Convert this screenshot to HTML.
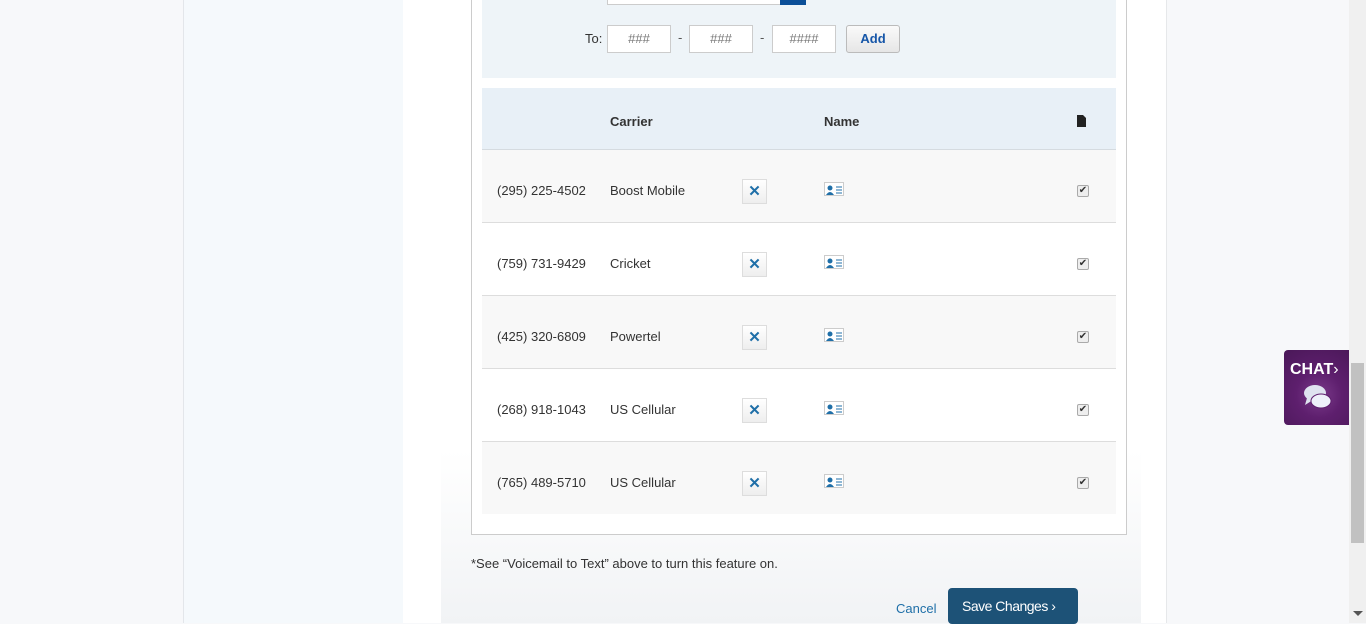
<!DOCTYPE html>
<html><head><style>
*{margin:0;padding:0;box-sizing:border-box}
body{width:1366px;height:623px;overflow:hidden;background:#f7f8fa;font-family:"Liberation Sans",Arial,sans-serif;font-size:14px;color:#333;position:relative}
.abs{position:absolute}
.inp{position:absolute;top:25px;width:64px;height:28px;border:1px solid #ccc;background:#fff;font-size:13px;color:#777;text-align:center;line-height:26px}
.row{position:absolute;left:482px;width:634px;height:73px;border-bottom:1px solid #ddd}
.row span{position:absolute;top:33px;font-size:13px}
.xb{position:absolute;left:260px;top:29px;width:25px;height:25px;border:1px solid #ddd;background:linear-gradient(#fff,#eee);color:#1f6fa8;font-weight:bold;text-align:center;line-height:23px;font-size:15px}
.card{position:absolute;left:342px;top:32px;width:20px;height:14px;border:1px solid #ccc;background:#fff}
.chk{position:absolute;left:595px;top:35px;width:12px;height:12px;border:1px solid #aaa;border-radius:2px;background:#eee;font-size:10px;line-height:10px;text-align:center;color:#333}
</style></head><body>
<div class="abs" style="left:183px;top:0;width:220px;height:623px;background:#f5f9fc;border-left:1px solid #e3e6ea"></div>
<div class="abs" style="left:403px;top:0;width:764px;height:623px;background:#fff;border-right:1px solid #e6e8ea"></div>
<div class="abs" style="left:441px;top:0;width:700px;height:623px;background:linear-gradient(#fff 0,#fff 450px,#f1f3f5 623px)"></div>
<div class="abs" style="left:471px;top:0;width:656px;height:535px;background:#fff;border:1px solid #ccc;border-top:none"></div>
<div class="abs" style="left:482px;top:0;width:634px;height:78px;background:#eef4f8"></div>
<div class="abs" style="left:607px;top:-10px;width:174px;height:15px;background:#fff;border:1px solid #ccc"></div>
<div class="abs" style="left:780px;top:-10px;width:26px;height:15px;background:#0b4f98"></div>
<div class="abs" style="left:585px;top:31px;font-size:13px">To:</div>
<div class="inp" style="left:607px">###</div>
<div class="abs" style="left:678px;top:30px;font-size:13px;color:#555">-</div>
<div class="inp" style="left:689px">###</div>
<div class="abs" style="left:760px;top:30px;font-size:13px;color:#555">-</div>
<div class="inp" style="left:772px">####</div>
<div class="abs" style="left:846px;top:25px;width:54px;height:28px;border:1px solid #bbb;border-radius:3px;background:linear-gradient(#fafafa,#e6e6e6);color:#1656a8;font-weight:bold;font-size:13px;text-align:center;line-height:26px">Add</div>
<div class="abs" style="left:482px;top:88px;width:634px;height:62px;background:#e8f0f7;border-bottom:1px solid #d5dbe0"></div>
<div class="abs" style="left:610px;top:114px;font-weight:bold;font-size:13px">Carrier</div>
<div class="abs" style="left:824px;top:114px;font-weight:bold;font-size:13px">Name</div>
<svg class="abs" style="left:1077px;top:115px" width="9" height="12"><path d="M0 0H6L9 3V12H0Z" fill="#222"/></svg>

<div class="row" style="top:150px;background:#f8f8f8"><span style="left:15px">(295) 225-4502</span><span style="left:128px">Boost Mobile</span><div class="xb">✕</div><div class="card"><svg width="18" height="12"><circle cx="5" cy="4" r="2.5" fill="#1f6fa8"/><path d="M1 11Q5 5 9 11Z" fill="#1f6fa8"/><path d="M11 3h6M11 6h6M11 9h6" stroke="#1f6fa8" stroke-width="1"/></svg></div><div class="chk">✔</div></div>
<div class="row" style="top:223px;background:#fff"><span style="left:15px">(759) 731-9429</span><span style="left:128px">Cricket</span><div class="xb">✕</div><div class="card"><svg width="18" height="12"><circle cx="5" cy="4" r="2.5" fill="#1f6fa8"/><path d="M1 11Q5 5 9 11Z" fill="#1f6fa8"/><path d="M11 3h6M11 6h6M11 9h6" stroke="#1f6fa8" stroke-width="1"/></svg></div><div class="chk">✔</div></div>
<div class="row" style="top:296px;background:#f8f8f8"><span style="left:15px">(425) 320-6809</span><span style="left:128px">Powertel</span><div class="xb">✕</div><div class="card"><svg width="18" height="12"><circle cx="5" cy="4" r="2.5" fill="#1f6fa8"/><path d="M1 11Q5 5 9 11Z" fill="#1f6fa8"/><path d="M11 3h6M11 6h6M11 9h6" stroke="#1f6fa8" stroke-width="1"/></svg></div><div class="chk">✔</div></div>
<div class="row" style="top:369px;background:#fff"><span style="left:15px">(268) 918-1043</span><span style="left:128px">US Cellular</span><div class="xb">✕</div><div class="card"><svg width="18" height="12"><circle cx="5" cy="4" r="2.5" fill="#1f6fa8"/><path d="M1 11Q5 5 9 11Z" fill="#1f6fa8"/><path d="M11 3h6M11 6h6M11 9h6" stroke="#1f6fa8" stroke-width="1"/></svg></div><div class="chk">✔</div></div>
<div class="row" style="top:442px;background:#f8f8f8;border-bottom:none;height:72px"><span style="left:15px">(765) 489-5710</span><span style="left:128px">US Cellular</span><div class="xb">✕</div><div class="card"><svg width="18" height="12"><circle cx="5" cy="4" r="2.5" fill="#1f6fa8"/><path d="M1 11Q5 5 9 11Z" fill="#1f6fa8"/><path d="M11 3h6M11 6h6M11 9h6" stroke="#1f6fa8" stroke-width="1"/></svg></div><div class="chk">✔</div></div>

<div class="abs" style="left:471px;top:556px;font-size:13px">*See “Voicemail to Text” above to turn this feature on.</div>
<div class="abs" style="left:896px;top:601px;font-size:13px;color:#1f6fa8">Cancel</div>
<div class="abs" style="left:948px;top:588px;width:130px;height:36px;background:#1d5277;border-radius:4px;color:#fff;font-size:14px;line-height:36px;padding-left:14px;letter-spacing:-0.5px">Save Changes ›</div>

<div class="abs" style="left:1284px;top:350px;width:66px;height:75px;border-radius:4px 0 0 4px;background:radial-gradient(circle at 35px 45px,#7a3a8a 0,#5e1f6e 40%,#4a1858 100%)">
<div class="abs" style="left:6px;top:11px;color:#fff;font-weight:bold;font-size:16px">CHAT<span style="font-weight:normal">›</span></div>
<svg class="abs" style="left:18px;top:33px" width="32" height="30"><ellipse cx="13" cy="10" rx="11" ry="8" fill="#dfe3f0"/><path d="M5 15L3 22L11 17Z" fill="#dfe3f0"/><ellipse cx="19" cy="18" rx="10" ry="7" fill="#eef0fa" stroke="#5e1f6e" stroke-width="1"/></svg>
</div>
<div class="abs" style="left:1349px;top:0;width:17px;height:623px;background:#f0f0f0"></div>
<div class="abs" style="left:1351px;top:363px;width:13px;height:180px;background:#c1c1c1"></div>
<div class="abs" style="left:1353px;top:611px;width:0;height:0;border-left:5px solid transparent;border-right:5px solid transparent;border-top:5px solid #555"></div>
</body></html>
